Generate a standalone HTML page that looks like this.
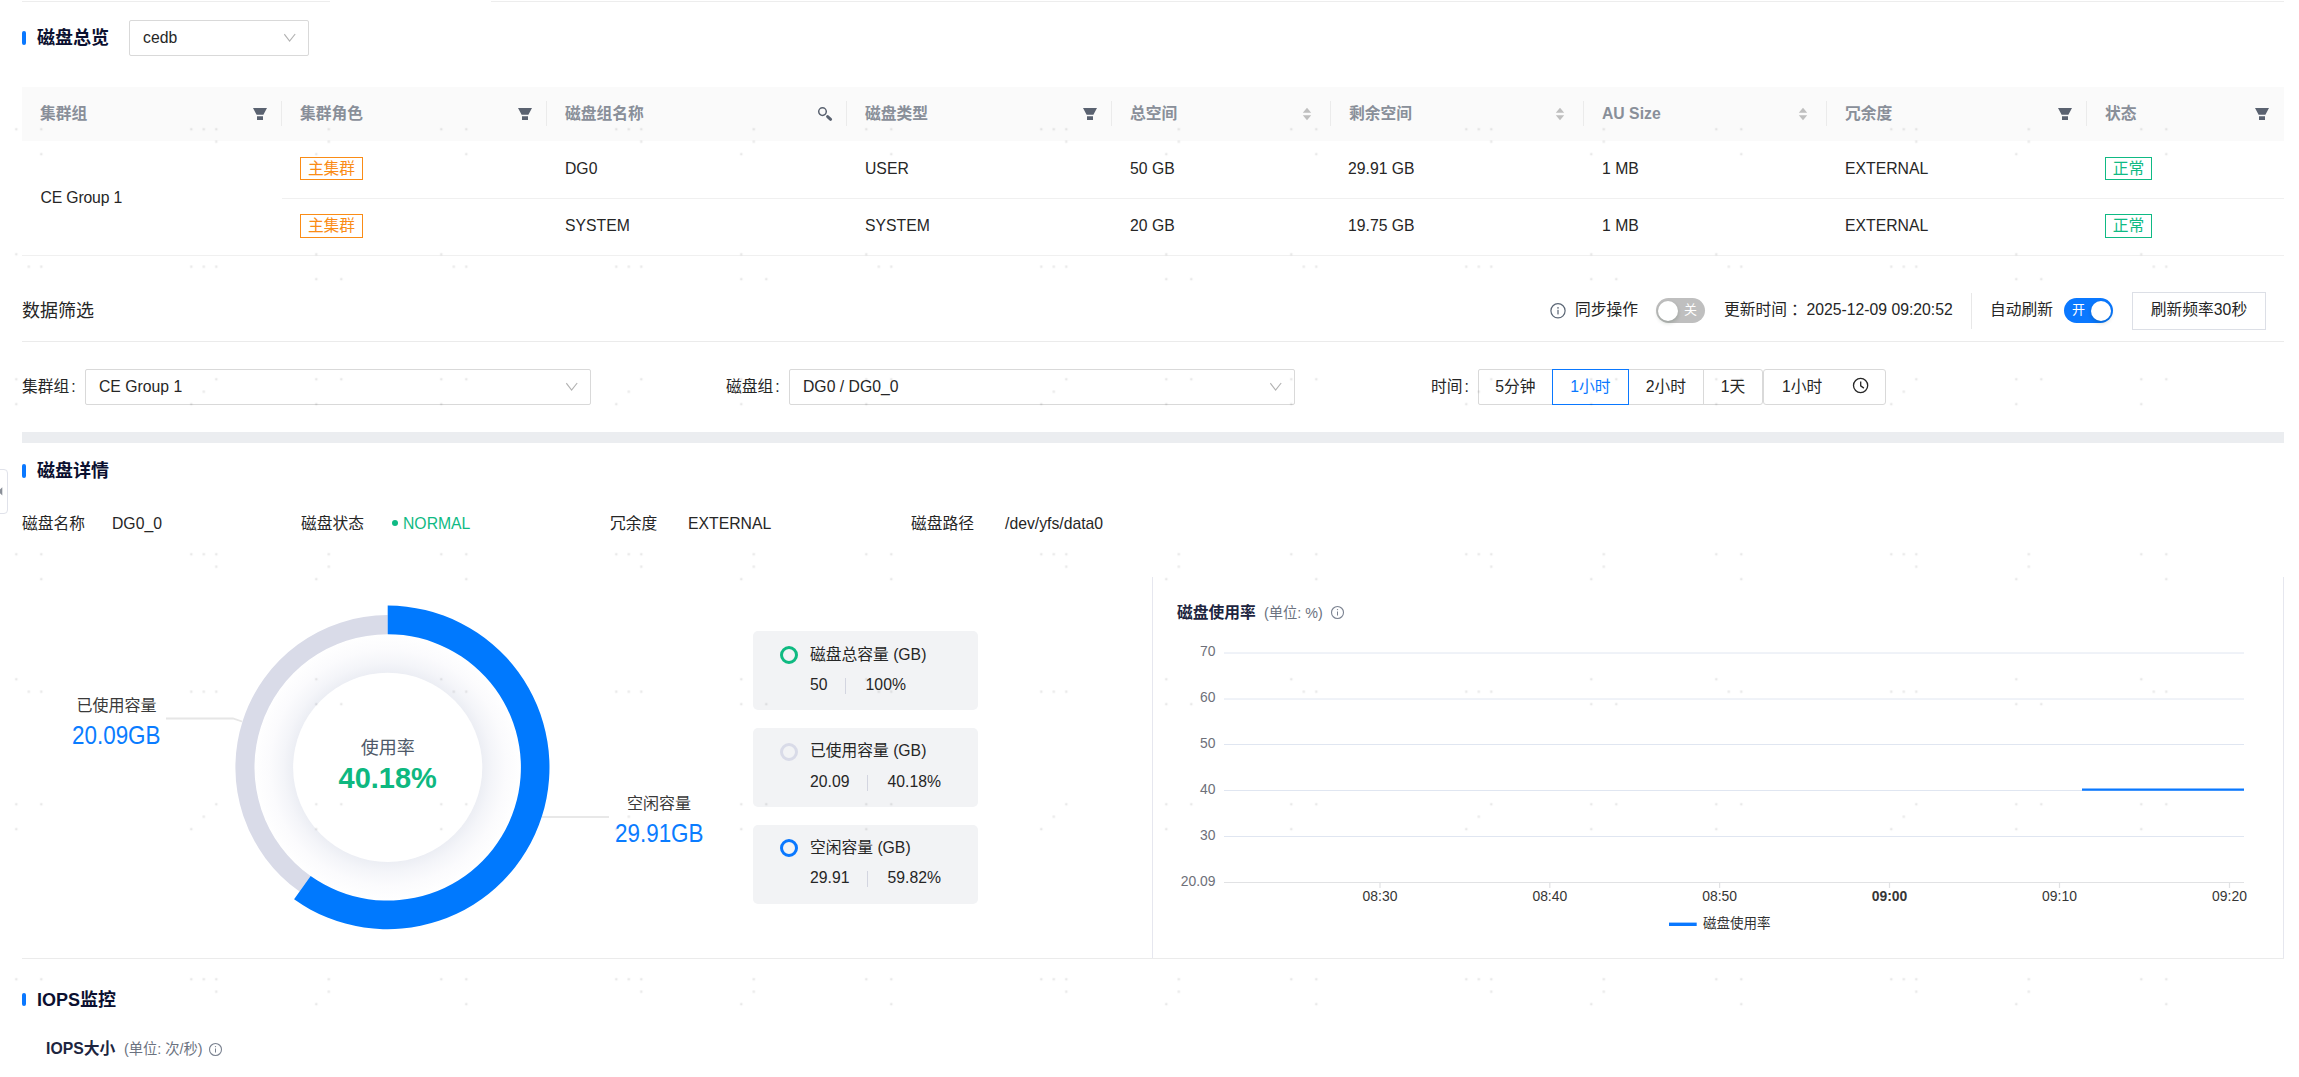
<!DOCTYPE html>
<html lang="zh-CN">
<head>
<meta charset="utf-8">
<title>磁盘总览</title>
<style>
*{box-sizing:border-box;margin:0;padding:0}
html,body{width:2299px;height:1077px;overflow:hidden;background:#fff}
body{position:relative;font-family:"Liberation Sans","Noto Sans CJK SC",sans-serif;font-size:15.75px;color:#262626;line-height:1}
.abs{position:absolute;white-space:nowrap}
.t{position:absolute;white-space:nowrap;line-height:24px;height:24px;margin-top:-11px}
.bar{position:absolute;left:22px;width:4px;height:14px;border-radius:2px;background:#0a78ff}
.h1{font-size:18px;font-weight:bold;color:#0b1030;left:37px}
.sel{position:absolute;border:1px solid #d9d9d9;border-radius:2px;background:#fff;height:36px}
.sel .v{position:absolute;left:13px;top:5px;line-height:24px;font-size:15.75px;color:#262626;white-space:nowrap}
.sel svg{position:absolute;right:12px;top:10px}
.th{position:absolute;top:87px;height:54px;background:#fafafa;font-weight:bold;color:#898f99;font-size:15.75px}
.th span{position:absolute;left:18px;top:15px;line-height:24px;white-space:nowrap}
.th i{position:absolute;right:0;top:14px;width:1px;height:25px;background:#ebebeb}
.th svg{position:absolute}
.td{font-size:15.75px;color:#262626}
.hl{position:absolute;height:1px;background:#f0f0f0}
.tag{position:absolute;height:23px;line-height:21px;font-size:15.75px;border:1px solid;border-radius:0;text-align:center;background:#fff}
.tag.o{color:#fa8c16;border-color:#fa8c16;width:63px}
.tag.g{color:#0fba84;border-color:#0fba84;width:47px}

.lbl{font-size:15.75px;color:#262626}
.sw{position:absolute;height:25px;width:49px;border-radius:12.5px}
.sw b{position:absolute;top:2.5px;width:20px;height:20px;border-radius:10px;background:#fff;box-shadow:0 2px 4px rgba(0,35,11,.2)}
.sw span{position:absolute;top:0;line-height:24px;font-size:13px;color:#fff}
.btn{position:absolute;top:369px;height:36px;border:1px solid #d9d9d9;background:#fff;font-size:15.75px;color:#262626;text-align:center;line-height:33px;white-space:nowrap}

.card{position:absolute;left:753px;width:225px;height:79px;border-radius:5px;background:#f2f3f5}
.card i{position:absolute;left:27px;top:15px;width:18px;height:18px;border-radius:9px;border:3.5px solid}
.card .a{left:57px;top:23px}
.card .b{left:57px;top:53px}
.card .b u{display:inline-block;width:1px;height:16px;background:#d3d5e0;margin:0 19.3px 0 17.6px;vertical-align:-3.5px;width:1.2px}
.ec{font-family:"Liberation Sans","Noto Sans CJK SC",sans-serif}
</style>
</head>
<body>
<div class="hl" style="left:22px;top:1px;width:308px;background:#ededed"></div><div class="hl" style="left:491px;top:1px;width:1793px;background:#ededed"></div>

<div class="bar" style="top:31px"></div>
<div class="t h1" style="top:37px">磁盘总览</div>
<div class="sel" style="left:129px;top:20px;width:180px"><span class="v">cedb</span>
<svg width="12" height="12" viewBox="0 0 12 12"><path d="M0.3 3.2 L5.6 10.1 L11.2 3" fill="none" stroke="#b2b2b2" stroke-width="1.15"/></svg></div>

<div class="th" style="left:22px;width:260px"><span>集群组</span><svg style="right:14px;top:20px" width="16" height="14" viewBox="0 0 16 14"><path d="M1 1 H15 L11.4 7.8 H4.6 Z M5 9.2 H11 V13 H5 Z" fill="#5a6270"/></svg><i></i></div>
<div class="th" style="left:282px;width:265px"><span>集群角色</span><svg style="right:14px;top:20px" width="16" height="14" viewBox="0 0 16 14"><path d="M1 1 H15 L11.4 7.8 H4.6 Z M5 9.2 H11 V13 H5 Z" fill="#5a6270"/></svg><i></i></div>
<div class="th" style="left:547px;width:300px"><span>磁盘组名称</span><svg style="right:14px;top:19px" width="16" height="16" viewBox="0 0 16 16"><circle cx="5.5" cy="5.6" r="3.8" fill="none" stroke="#5a6270" stroke-width="1.5"/><path d="M10.6 10.6 L13.6 13.3" stroke="#5a6270" stroke-width="3" stroke-linecap="round"/></svg><i></i></div>
<div class="th" style="left:847px;width:265px"><span>磁盘类型</span><svg style="right:14px;top:20px" width="16" height="14" viewBox="0 0 16 14"><path d="M1 1 H15 L11.4 7.8 H4.6 Z M5 9.2 H11 V13 H5 Z" fill="#5a6270"/></svg><i></i></div>
<div class="th" style="left:1112px;width:219px"><span>总空间</span><svg style="right:19px;top:20px" width="10" height="14" viewBox="0 0 10 14"><path d="M5 0.8 L9.2 5.7 H0.8 Z M0.8 8.3 H9.2 L5 13.3 Z" fill="#bfbfbf"/></svg><i></i></div>
<div class="th" style="left:1331px;width:253px"><span>剩余空间</span><svg style="right:19px;top:20px" width="10" height="14" viewBox="0 0 10 14"><path d="M5 0.8 L9.2 5.7 H0.8 Z M0.8 8.3 H9.2 L5 13.3 Z" fill="#bfbfbf"/></svg><i></i></div>
<div class="th" style="left:1584px;width:243px"><span>AU Size</span><svg style="right:19px;top:20px" width="10" height="14" viewBox="0 0 10 14"><path d="M5 0.8 L9.2 5.7 H0.8 Z M0.8 8.3 H9.2 L5 13.3 Z" fill="#bfbfbf"/></svg><i></i></div>
<div class="th" style="left:1827px;width:260px"><span>冗余度</span><svg style="right:14px;top:20px" width="16" height="14" viewBox="0 0 16 14"><path d="M1 1 H15 L11.4 7.8 H4.6 Z M5 9.2 H11 V13 H5 Z" fill="#5a6270"/></svg><i></i></div>
<div class="th" style="left:2087px;width:197px"><span>状态</span><svg style="right:14px;top:20px" width="16" height="14" viewBox="0 0 16 14"><path d="M1 1 H15 L11.4 7.8 H4.6 Z M5 9.2 H11 V13 H5 Z" fill="#5a6270"/></svg></div>

<div class="t td" style="left:40.5px;top:197px;letter-spacing:-0.15px">CE Group 1</div>
<div class="hl" style="left:282px;top:198px;width:2002px"></div>
<div class="hl" style="left:22px;top:255px;width:2262px"></div>

<div class="tag o" style="left:300px;top:157px">主集群</div>
<div class="t td" style="left:565px;top:168px">DG0</div>
<div class="t td" style="left:865px;top:168px">USER</div>
<div class="t td" style="left:1130px;top:168px">50 GB</div>
<div class="t td" style="left:1348px;top:168px">29.91 GB</div>
<div class="t td" style="left:1602px;top:168px">1 MB</div>
<div class="t td" style="left:1845px;top:168px">EXTERNAL</div>
<div class="tag g" style="left:2105px;top:157px">正常</div>

<div class="tag o" style="left:300px;top:214px;height:24px;line-height:22px">主集群</div>
<div class="t td" style="left:565px;top:225px">SYSTEM</div>
<div class="t td" style="left:865px;top:225px">SYSTEM</div>
<div class="t td" style="left:1130px;top:225px">20 GB</div>
<div class="t td" style="left:1348px;top:225px">19.75 GB</div>
<div class="t td" style="left:1602px;top:225px">1 MB</div>
<div class="t td" style="left:1845px;top:225px">EXTERNAL</div>
<div class="tag g" style="left:2105px;top:214px;height:24px;line-height:22px">正常</div>


<div class="t" style="left:22px;top:310px;font-size:18px;color:#262626">数据筛选</div>
<svg class="abs" style="left:1550px;top:303px" width="16" height="16" viewBox="0 0 16 16" overflow="visible"><circle cx="8" cy="7.8" r="7.1" fill="none" stroke="#5b6675" stroke-width="1.2"/><rect x="7.4" y="6.8" width="1.2" height="4.6" fill="#5b6675"/><circle cx="8" cy="4.9" r="0.8" fill="#5b6675"/></svg>
<div class="t lbl" style="left:1575px;top:309px">同步操作</div>
<div class="sw" style="left:1656px;top:298px;background:#bfbfbf"><b style="left:2px"></b><span style="left:28px">关</span></div>
<div class="t lbl" style="left:1724px;top:309px">更新时间<span style="position:relative;left:4px">：</span><span style="margin-left:-0.7px"> 2025-12-09 09:20:52</span></div>
<div class="abs" style="left:1971px;top:293px;width:1px;height:36px;background:#e8e8e8"></div>
<div class="t lbl" style="left:1990px;top:309px">自动刷新</div>
<div class="sw" style="left:2064px;top:298px;background:#0a78ff"><b style="left:27px"></b><span style="left:8px">开</span></div>
<div class="abs" style="left:2132px;top:292px;width:134px;height:38px;border:1px solid #dcdfe6;background:#fff;font-size:15.75px;line-height:34px;text-align:center;color:#262626">刷新频率30秒</div>
<div class="hl" style="left:22px;top:341px;width:2262px;background:#ebebeb"></div>

<div class="t lbl" style="left:22px;top:386px">集群组<span style="margin-left:2px">:</span></div>
<div class="sel" style="left:85px;top:369px;width:506px"><span class="v">CE Group 1</span>
<svg width="12" height="12" viewBox="0 0 12 12"><path d="M0.3 3.2 L5.6 10.1 L11.2 3" fill="none" stroke="#b2b2b2" stroke-width="1.15"/></svg></div>
<div class="t lbl" style="left:726px;top:386px">磁盘组<span style="margin-left:2px">:</span></div>
<div class="sel" style="left:789px;top:369px;width:506px"><span class="v">DG0 / DG0_0</span>
<svg width="12" height="12" viewBox="0 0 12 12"><path d="M0.3 3.2 L5.6 10.1 L11.2 3" fill="none" stroke="#b2b2b2" stroke-width="1.15"/></svg></div>
<div class="t lbl" style="left:1431px;top:386px">时间<span style="margin-left:2px">:</span></div>
<div class="btn" style="left:1478px;width:75px;border-radius:2px 0 0 2px">5分钟</div>
<div class="btn" style="left:1629px;width:75px;border-left:0">2小时</div>
<div class="btn" style="left:1703px;width:60px;border-radius:0 3px 3px 0">1天</div>
<div class="btn" style="left:1763px;width:123px;border-radius:3px;text-align:left;padding-left:18px">1小时</div>
<div class="btn" style="left:1552px;width:77px;border-color:#0a78ff;color:#0a78ff">1小时</div>
<svg class="abs" style="left:1852px;top:377.3px" width="17" height="17" viewBox="0 0 17 17"><circle cx="8.6" cy="8.5" r="7.1" fill="none" stroke="#262626" stroke-width="1.3"/><path d="M8.7 4.5 V8.8 L11.9 11.1" fill="none" stroke="#262626" stroke-width="1.3"/></svg>

<div class="abs" style="left:22px;top:432px;width:2262px;height:11px;background:#ebedf0"></div>


<div class="bar" style="top:464px"></div>
<div class="t h1" style="top:470px">磁盘详情</div>
<div class="abs" style="left:-1px;top:469px;width:8.5px;height:45px;border:1px solid #e0e2ea;border-radius:0 4px 4px 0;background:#fff"></div>
<svg class="abs" style="left:0;top:486px" width="5" height="11" viewBox="0 0 5 11"><path d="M2.3 1.2 L-2 5.4 L2.3 9.6 Z" fill="#8a8f98"/></svg>

<div class="t lbl" style="left:22px;top:523px">磁盘名称</div>
<div class="t lbl" style="left:112px;top:523px">DG0_0</div>
<div class="t lbl" style="left:301px;top:523px">磁盘状态</div>
<div class="abs" style="left:392px;top:520px;width:6px;height:6px;border-radius:3px;background:#0fba84"></div>
<div class="t lbl" style="left:403px;top:523px;color:#0fba84">NORMAL</div>
<div class="t lbl" style="left:610px;top:523px">冗余度</div>
<div class="t lbl" style="left:688px;top:523px">EXTERNAL</div>
<div class="t lbl" style="left:911px;top:523px">磁盘路径</div>
<div class="t lbl" style="left:1005px;top:523px">/dev/yfs/data0</div>

<svg class="abs" style="left:0;top:560px" width="1152" height="400" viewBox="0 560 1152 400">
<defs><radialGradient id="rg" cx="387.7" cy="767.4" r="134" gradientUnits="userSpaceOnUse">
<stop offset="0.705" stop-color="#eceef4"/><stop offset="0.78" stop-color="#f4f5f9"/><stop offset="0.88" stop-color="#fbfbfd"/><stop offset="1" stop-color="#ffffff"/></radialGradient></defs>
<circle cx="387.7" cy="767.4" r="134" fill="url(#rg)"/>
<circle cx="387.7" cy="767.4" r="94.6" fill="#fff"/>
<path d="M299.58 891.62 A152.3 152.3 0 0 1 387.68 615.10 L387.69 634.20 A133.2 133.2 0 0 0 310.63 876.04 Z" fill="#d9dbe8"/>
<path d="M387.70 605.60 A161.8 161.8 0 1 1 294.08 899.37 L310.63 876.04 A133.2 133.2 0 1 0 387.70 634.20 Z" fill="#0079fe"/>
<path d="M166 718.5 H233 L242 721.5" fill="none" stroke="#e6e6e6" stroke-width="1.8"/>
<path d="M542 817 H609" fill="none" stroke="#e8e8e8" stroke-width="2"/>
<text class="ec" x="116.5" y="710.5" font-size="16" fill="#3a3a3a" text-anchor="middle">已使用容量</text>
<text class="ec" x="72" y="743.5" font-size="26" fill="#0a7cff" textLength="88.5" lengthAdjust="spacingAndGlyphs">20.09GB</text>
<text class="ec" x="659" y="809" font-size="16" fill="#3a3a3a" text-anchor="middle">空闲容量</text>
<text class="ec" x="615" y="841.5" font-size="26" fill="#0a7cff" textLength="88.5" lengthAdjust="spacingAndGlyphs">29.91GB</text>
<text class="ec" x="387.7" y="753.5" font-size="18" fill="#4e5969" text-anchor="middle">使用率</text>
<text class="ec" x="387.7" y="787.5" font-size="29" font-weight="bold" fill="#0eb880" text-anchor="middle">40.18%</text>
</svg>

<div class="card" style="top:631px"><i style="border-color:#0fba81"></i><div class="t a">磁盘总容量 (GB)</div><div class="t b">50<u></u>100%</div></div>
<div class="card" style="top:728px"><i style="border-color:#d9dbe8"></i><div class="t a" style="top:22px">已使用容量 (GB)</div><div class="t b">20.09<u></u>40.18%</div></div>
<div class="card" style="top:825px"><i style="border-color:#0a78ff;top:14px"></i><div class="t a" style="top:22px">空闲容量 (GB)</div><div class="t b" style="top:52px">29.91<u></u>59.82%</div></div>

<div class="hl" style="left:22px;top:958px;width:2262px;background:#ebebeb"></div>
<div class="abs" style="left:1152px;top:577px;width:1px;height:381px;background:#e6e7ef"></div>
<div class="abs" style="left:2283px;top:577px;width:1px;height:381px;background:#e6e7ef"></div>


<div class="t" style="left:1177px;top:612px;font-weight:bold;color:#1d2540">磁盘使用率</div>
<div class="t" style="left:1264px;top:612px;font-size:14.3px;color:#6b7280">(单位: %)</div>
<svg class="abs" style="left:1330px;top:605px" width="15" height="15" viewBox="0 0 15 15"><circle cx="7.5" cy="7.5" r="6" fill="none" stroke="#7a8290" stroke-width="1.1"/><rect x="7" y="6.5" width="1" height="4" fill="#7a8290"/><circle cx="7.5" cy="4.6" r="0.7" fill="#7a8290"/></svg>
<svg class="abs" style="left:1153px;top:630px" width="1130" height="320" viewBox="1153 630 1130 320">
<path d="M1224 653 H2244" stroke="#e0e6f1" stroke-width="1"/><path d="M1224 699 H2244" stroke="#e0e6f1" stroke-width="1"/><path d="M1224 744.5 H2244" stroke="#e0e6f1" stroke-width="1"/><path d="M1224 790.5 H2244" stroke="#e0e6f1" stroke-width="1"/><path d="M1224 836.5 H2244" stroke="#e0e6f1" stroke-width="1"/><path d="M1224 882.5 H2244" stroke="#e1e2e4" stroke-width="1.2"/><text class="ec" x="1215.5" y="656" font-size="13.9" fill="#6e7079" text-anchor="end">70</text><text class="ec" x="1215.5" y="702" font-size="13.9" fill="#6e7079" text-anchor="end">60</text><text class="ec" x="1215.5" y="748" font-size="13.9" fill="#6e7079" text-anchor="end">50</text><text class="ec" x="1215.5" y="794" font-size="13.9" fill="#6e7079" text-anchor="end">40</text><text class="ec" x="1215.5" y="840" font-size="13.9" fill="#6e7079" text-anchor="end">30</text><text class="ec" x="1215.5" y="886" font-size="13.9" fill="#6e7079" text-anchor="end">20.09</text><path d="M1380 883 V888" stroke="#e1e2e4" stroke-width="1.2"/><text class="ec" x="1380" y="901" font-size="13.9" fill="#363636" text-anchor="middle">08:30</text><path d="M1549.8 883 V888" stroke="#e1e2e4" stroke-width="1.2"/><text class="ec" x="1549.8" y="901" font-size="13.9" fill="#363636" text-anchor="middle">08:40</text><path d="M1719.6 883 V888" stroke="#e1e2e4" stroke-width="1.2"/><text class="ec" x="1719.6" y="901" font-size="13.9" fill="#363636" text-anchor="middle">08:50</text><path d="M1889.5 883 V888" stroke="#e1e2e4" stroke-width="1.2"/><text class="ec" x="1889.5" y="901" font-size="13.9" fill="#363636" text-anchor="middle" font-weight="bold">09:00</text><path d="M2059.5 883 V888" stroke="#e1e2e4" stroke-width="1.2"/><text class="ec" x="2059.5" y="901" font-size="13.9" fill="#363636" text-anchor="middle">09:10</text><path d="M2229.5 883 V888" stroke="#e1e2e4" stroke-width="1.2"/><text class="ec" x="2229.5" y="901" font-size="13.9" fill="#363636" text-anchor="middle">09:20</text>
<path d="M2082 789.6 H2244" stroke="#0a78ff" stroke-width="2.3"/>
<path d="M1669 924.3 H1696.7" stroke="#0a78ff" stroke-width="3.4"/>
<text class="ec" x="1703" y="928" font-size="13.5" fill="#333">磁盘使用率</text>
</svg>

<div class="bar" style="top:993px;height:13px"></div>
<div class="t h1" style="top:999px">IOPS监控</div>
<div class="t" style="left:46px;top:1048px;font-weight:bold;color:#1d2540">IOPS大小</div>
<div class="t" style="left:124px;top:1048px;font-size:14.3px;color:#6b7280">(单位: 次/秒)</div>
<svg class="abs" style="left:208px;top:1042px" width="15" height="15" viewBox="0 0 15 15"><circle cx="7.5" cy="7.5" r="6" fill="none" stroke="#7a8290" stroke-width="1.1"/><rect x="7" y="6.5" width="1" height="4" fill="#7a8290"/><circle cx="7.5" cy="4.6" r="0.7" fill="#7a8290"/></svg>


<svg class="abs" style="left:0;top:0;pointer-events:none" width="2290" height="1077" viewBox="0 0 2290 1077">
<defs><pattern id="wm" x="35.3" y="123.25" width="425" height="425" patternUnits="userSpaceOnUse"><g fill="#000" fill-opacity="0.085"><rect x="4.85" y="4.85" width="2.3" height="2.3"/><rect x="154.85" y="4.85" width="2.3" height="2.3"/><rect x="167.35" y="4.85" width="2.3" height="2.3"/><rect x="179.85" y="4.85" width="2.3" height="2.3"/><rect x="292.35" y="4.85" width="2.3" height="2.3"/><rect x="404.85" y="4.85" width="2.3" height="2.3"/><rect x="179.85" y="17.30" width="2.3" height="2.3"/><rect x="292.35" y="17.30" width="2.3" height="2.3"/><rect x="4.85" y="29.75" width="2.3" height="2.3"/><rect x="279.85" y="29.75" width="2.3" height="2.3"/><rect x="279.85" y="129.85" width="2.3" height="2.3"/><rect x="404.85" y="129.85" width="2.3" height="2.3"/><rect x="4.85" y="142.30" width="2.3" height="2.3"/><rect x="154.85" y="142.30" width="2.3" height="2.3"/><rect x="167.35" y="142.30" width="2.3" height="2.3"/><rect x="179.85" y="142.30" width="2.3" height="2.3"/><rect x="417.35" y="142.30" width="2.3" height="2.3"/><rect x="279.85" y="154.75" width="2.3" height="2.3"/><rect x="304.85" y="154.75" width="2.3" height="2.3"/><rect x="4.85" y="254.85" width="2.3" height="2.3"/><rect x="179.85" y="254.85" width="2.3" height="2.3"/><rect x="279.85" y="254.85" width="2.3" height="2.3"/><rect x="304.85" y="254.85" width="2.3" height="2.3"/><rect x="404.85" y="254.85" width="2.3" height="2.3"/><rect x="167.35" y="267.30" width="2.3" height="2.3"/><rect x="154.85" y="279.75" width="2.3" height="2.3"/><rect x="279.85" y="279.75" width="2.3" height="2.3"/><rect x="404.85" y="279.75" width="2.3" height="2.3"/></g></pattern></defs>
<rect x="0" y="0" width="2290" height="1077" fill="url(#wm)"/>
</svg>
</body>
</html>
